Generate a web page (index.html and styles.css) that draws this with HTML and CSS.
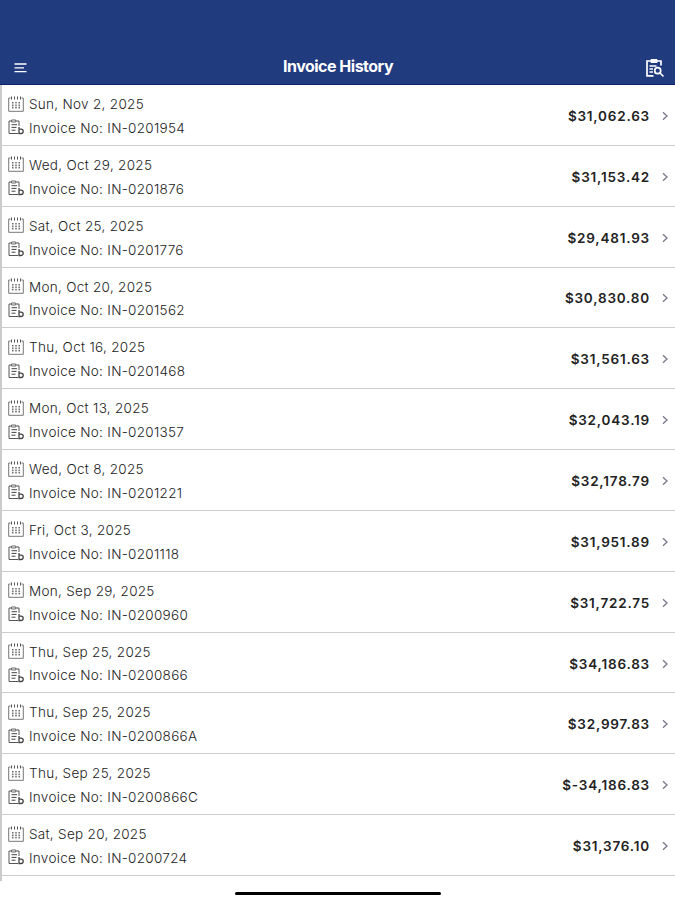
FILE: index.html
```
<!DOCTYPE html>
<html lang="en">
<head>
<meta charset="UTF-8" />
<meta name="viewport" content="width=device-width, initial-scale=1" />
<title>Invoice History</title>
<link rel="stylesheet" href="styles.css">
</head>
<body>
<svg class="sprite" aria-hidden="true">
  <symbol id="calendar" viewBox="0 0 16 16">
    <path d="M2.5 2H.7v13.3h14.6V2h-1.8" fill="none" stroke="#777" />
    <path d="M3.5 .5v3M6.5 .5v3M9.5 .5v3M12.5 .5v3" fill="none" stroke="#555" />
    <path d="M4.8 6v6.5M8 6v6.5M11.2 6v6.5" fill="none" stroke="#555" stroke-width="1.3" stroke-dasharray="1.6 .8" />
  </symbol>
  <symbol id="invoice" viewBox="0 0 16 16">
    <path d="M3 2H1v12.5h9M8 2h3v5" fill="none" stroke="#555" />
    <path d="M3.5 1h4.2v2H3.5z" fill="none" stroke="#666" />
    <path d="M3.5 5.7H9M3.5 8.4h5M3.5 11.2h4" fill="none" stroke="#444" />
    <path d="M11 8v6.5h2a2.1 2.1 0 0 0 0-4.4h-2" fill="none" stroke="#444" stroke-width="1.3" />
  </symbol>
</svg>

<header>
  <button class="menu" aria-label="Menu">
    <svg width="13" height="10" viewBox="0 0 13 10" fill="none" stroke="#fff" stroke-width="1.3">
      <path d="M.5 1h12M.5 4.8h9.5M.5 8.6h12" />
    </svg>
  </button>
  <h1>Invoice History</h1>
  <button class="search" aria-label="Search invoices">
    <svg width="20" height="20" viewBox="0 0 20 20" fill="none" stroke="#fff" stroke-width="1.7">
      <path d="M8.5 17.8H2V3h14v4.5" />
      <path d="M6 1.5h6v3H6z" fill="#fff" stroke-width="1" />
      <path d="M4.5 8h7M4.5 11h3.5M4.5 14h3.5" stroke-width="1.4" />
      <circle cx="12.7" cy="12.7" r="3" />
      <path d="M15 15l3.5 3.5" />
    </svg>
  </button>
</header>

<main id="invoices"></main>

<footer><div class="home-bar"></div></footer>

<script>
  const invoices = [
    ['Sun, Nov 2, 2025', 'IN-0201954', '$31,062.63'],
    ['Wed, Oct 29, 2025', 'IN-0201876', '$31,153.42'],
    ['Sat, Oct 25, 2025', 'IN-0201776', '$29,481.93'],
    ['Mon, Oct 20, 2025', 'IN-0201562', '$30,830.80'],
    ['Thu, Oct 16, 2025', 'IN-0201468', '$31,561.63'],
    ['Mon, Oct 13, 2025', 'IN-0201357', '$32,043.19'],
    ['Wed, Oct 8, 2025', 'IN-0201221', '$32,178.79'],
    ['Fri, Oct 3, 2025', 'IN-0201118', '$31,951.89'],
    ['Mon, Sep 29, 2025', 'IN-0200960', '$31,722.75'],
    ['Thu, Sep 25, 2025', 'IN-0200866', '$34,186.83'],
    ['Thu, Sep 25, 2025', 'IN-0200866A', '$32,997.83'],
    ['Thu, Sep 25, 2025', 'IN-0200866C', '$-34,186.83'],
    ['Sat, Sep 20, 2025', 'IN-0200724', '$31,376.10']
  ];

  document.getElementById('invoices').innerHTML = invoices.map(([date, number, amount]) => `
    <div class="invoice">
      <div class="details">
        <div class="line"><svg class="icon"><use href="#calendar" /></svg><span>${date}</span></div>
        <div class="line"><svg class="icon"><use href="#invoice" /></svg><span>Invoice No: ${number}</span></div>
      </div>
      <div class="amount">${amount}</div>
      <svg class="chevron" viewBox="0 0 6 10"><path d="M1 1.2L5 5L1 8.8" /></svg>
    </div>`).join('');
</script>
</body>
</html>
```
FILE: styles.css
```
* {
  box-sizing: border-box;
}
body {
  margin: 0;
  height: 900px;
  overflow: hidden;
  font-family: Inter, "Liberation Sans", sans-serif;
  background: #fff;
}
.sprite {
  display: none;
}
header {
  height: 85px;
  padding: 46px 10px 0 14px;
  display: flex;
  justify-content: space-between;
  background: #213b7f;
  border-bottom: 1px solid #10206c;
}
header h1 {
  margin: 0 3px 0 0;
  font-size: 16px;
  line-height: 40px;
  font-weight: 700;
  letter-spacing: -0.5px;
  color: #fff;
}
header button {
  width: 20px;
  height: 40px;
  margin-top: 2px;
  padding: 0;
  display: flex;
  align-items: center;
  border: none;
  background: none;
}
#invoices {
  height: 796px;
  border-left: 2px solid #ccc;
}
.invoice {
  height: 60.85px;
  padding: 2px 7px 0 6px;
  display: flex;
  align-items: center;
  border-bottom: 1px solid #ccc;
}
.details {
  flex: 1;
}
.line {
  height: 23.8px;
  display: flex;
  align-items: center;
  font-size: 13.5px;
  font-weight: 300;
  letter-spacing: 0.3px;
  color: #222;
}
.icon {
  width: 16px;
  height: 16px;
  margin: -1px 5px 0 0;
}
.amount {
  font-size: 13.5px;
  font-weight: 600;
  letter-spacing: 0.8px;
  color: #222;
}
.chevron {
  width: 6px;
  height: 10px;
  margin-left: 12px;
  fill: none;
  stroke: #77778c;
  stroke-width: 1.3;
}
footer {
  padding-top: 11px;
}
.home-bar {
  width: 206px;
  height: 3px;
  margin: 0 auto;
  border-radius: 2px;
  background: #000;
}
```
